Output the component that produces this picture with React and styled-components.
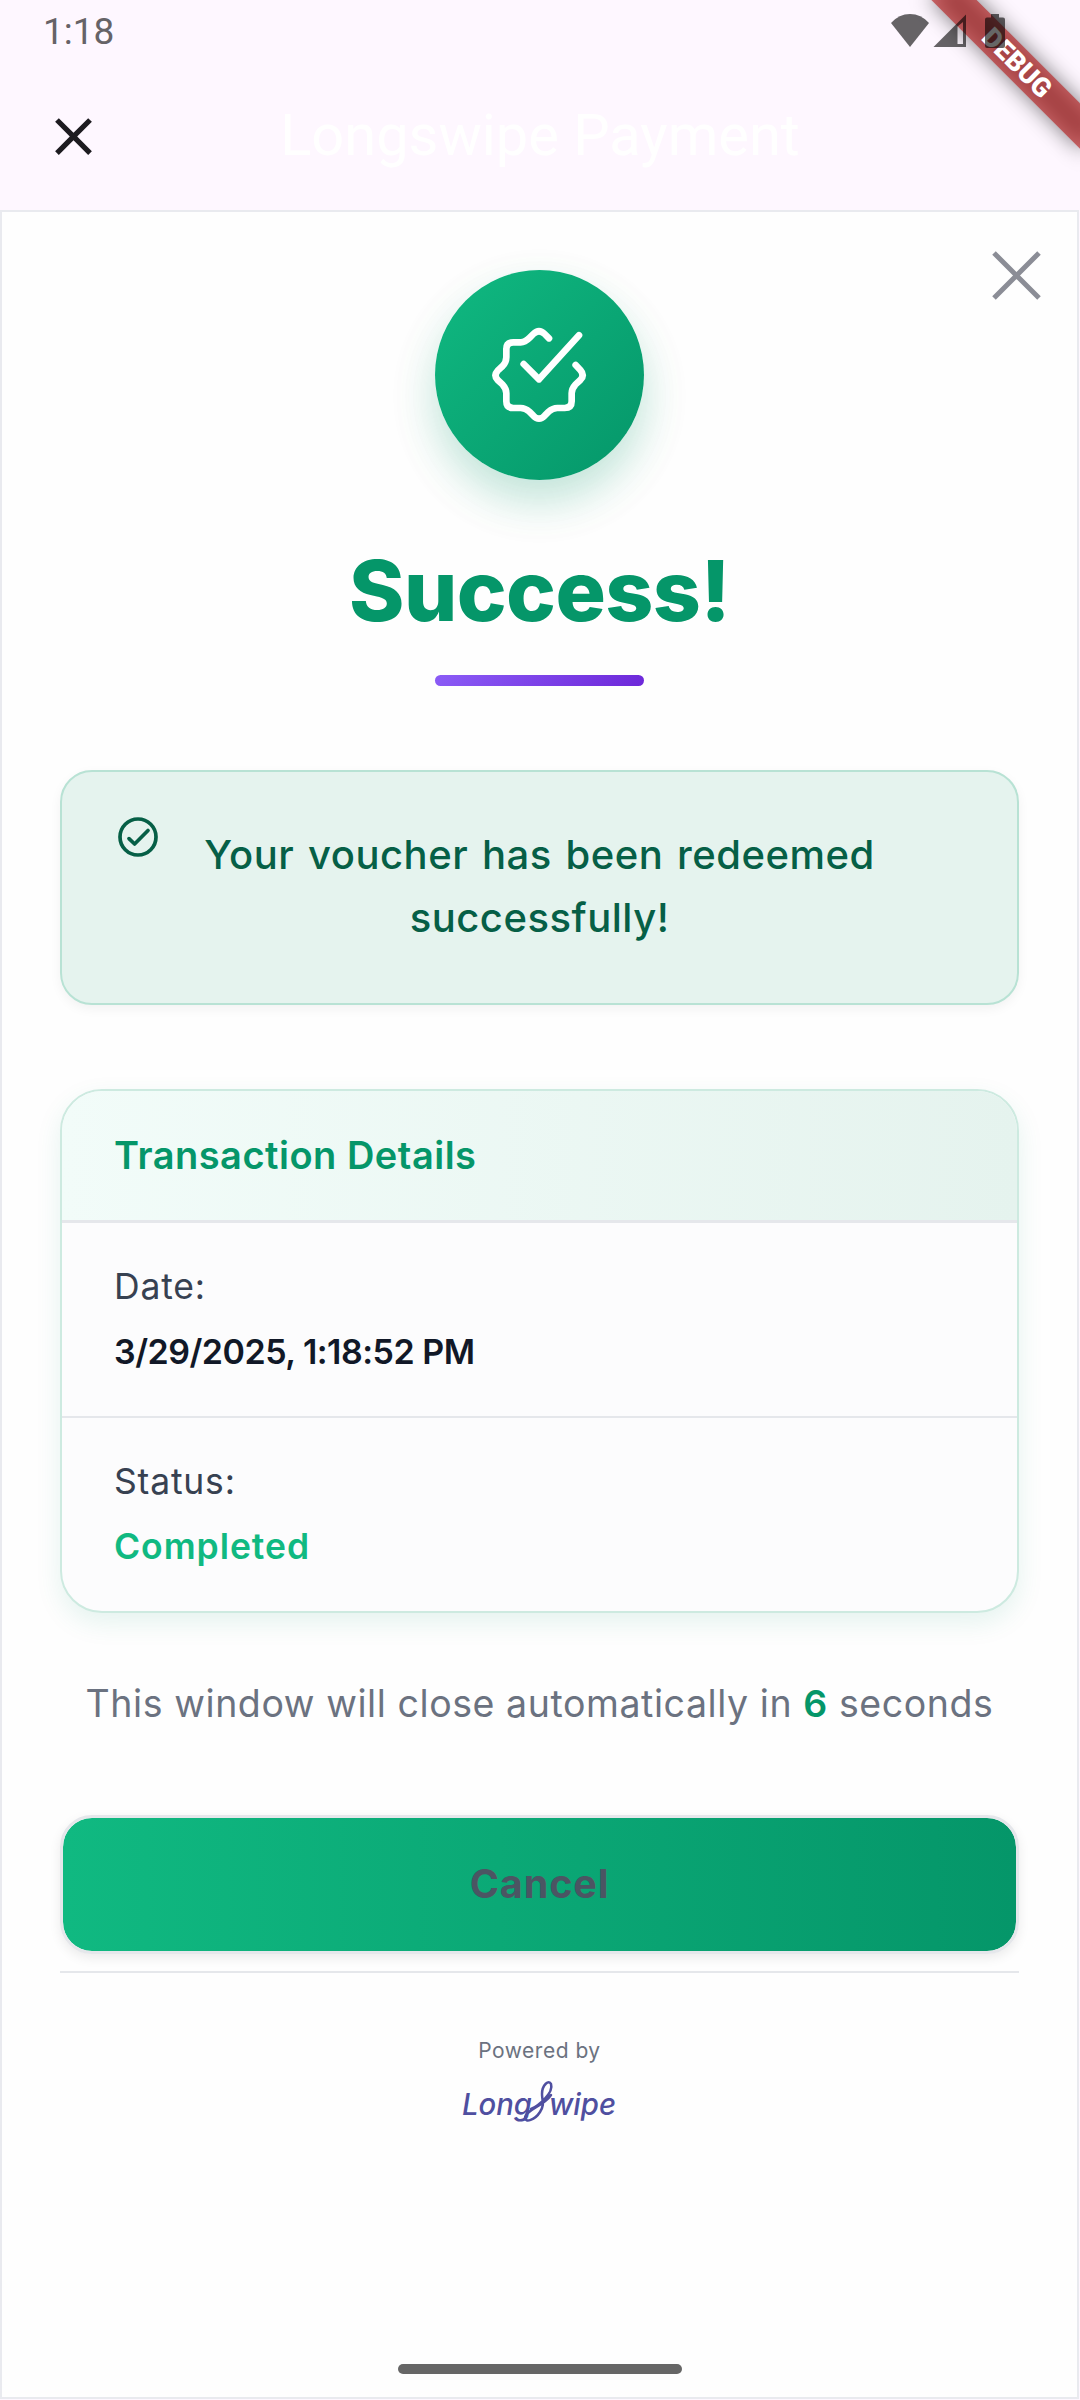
import styled, { createGlobalStyle } from "styled-components";

const GlobalStyle = createGlobalStyle`
    * {
        box-sizing: border-box;
    }

    body {
        margin: 0;
        background-color: #fef7ff;
        font-family: Inter, "Open Sans", sans-serif;
    }

    p, h1, h2 {
        margin: 0;
    }
`

const Screen = styled.div`
    position: relative;
    width: 1080px;
    height: 2400px;
    display: flex;
    flex-direction: column;
    overflow: hidden;
`

/* status bar */
const StatusBar = styled.div`
    position: relative;
    z-index: 2;
    height: 63px;
    padding: 0 74px 0 43px;
    display: flex;
    justify-content: space-between;
    color: #666367;
`

const Clock = styled.p`
    font-family: Roboto, sans-serif;
    font-size: 37px;
    line-height: 63px;
`

const StatusIcons = styled.svg`
    width: 116px;
    height: 36px;
    margin-top: 13px;
`

/* debug banner */
const BannerClip = styled.div`
    position: absolute;
    top: 0;
    right: 0;
    width: 260px;
    height: 260px;
    overflow: hidden;
`

const BannerStrip = styled.div`
    position: absolute;
    left: 91px;
    top: 47px;
    width: 212px;
    height: 32px;
    transform: rotate(45deg);
`

const BannerShadow = styled(BannerStrip)`
    background-color: rgba(0, 0, 0, 0.5);
    filter: blur(10.4px);
`

const BannerLabel = styled(BannerStrip)`
    background-color: rgba(183, 28, 28, 0.63);
    color: white;
    font-family: Roboto, sans-serif;
    font-size: 26.8px;
    font-weight: 900;
    line-height: 32px;
    text-align: center;
`

/* app bar */
const AppBar = styled.header`
    height: 147px;
    padding-left: 42px;
    display: grid;
    grid-template-columns: 63px 1fr 105px;
    align-items: center;
`

const AppTitle = styled.h1`
    padding-bottom: 4px;
    font-family: Roboto, sans-serif;
    font-size: 57.75px;
    font-weight: 400;
    line-height: 74px;
    color: white;
    text-align: center;
`

/* checkout window */
const Window = styled.main`
    position: relative;
    width: 1079px;
    height: 2189px;
    padding: 58px 58px 0;
    border: 2px solid #e9eaef;
    background-color: #fefefe;
    display: flex;
    flex-direction: column;
    align-items: center;
`

const CloseIcon = styled.svg`
    position: absolute;
    top: 39px;
    right: 36px;
    width: 49px;
    height: 49px;
`

const Badge = styled.div`
    width: 209px;
    height: 210px;
    border-radius: 50%;
    display: flex;
    justify-content: center;
    align-items: center;
    background: linear-gradient(135deg, #10b981, #059669);
    box-shadow: 0 21px 63px rgba(5, 150, 105, 0.06), 0 21px 42px rgba(5, 150, 105, 0.2);
`

const Title = styled.h2`
    margin-top: 61px;
    font-size: 84px;
    font-weight: 800;
    line-height: 100px;
    letter-spacing: -0.6px;
    color: #059669;
`

const Underline = styled.div`
    width: 209px;
    height: 11px;
    margin-top: 34px;
    border-radius: 6px;
    background: linear-gradient(135deg, #8b5cf6, #6d28d9);
`

const Notice = styled.section`
    width: 959px;
    height: 235px;
    margin-top: 84px;
    padding: 44px 55px;
    display: grid;
    grid-template-columns: 42px 1fr 42px;
    border: 2px solid #b8e2d4;
    border-radius: 32px;
    background-color: #e5f3ee;
    box-shadow: 0 4px 12px rgba(0, 0, 0, 0.05);
`

const NoticeText = styled.p`
    margin-top: 7px;
    font-size: 40px;
    font-weight: 500;
    line-height: 63px;
    letter-spacing: 0.5px;
    word-spacing: 2.6px;
    text-align: center;
    white-space: nowrap;
    color: #065f46;
`

const Details = styled.section`
    width: 959px;
    margin-top: 84px;
    border: 2px solid #cdeae0;
    border-radius: 42px;
    background-color: #fcfcfd;
    box-shadow: 0 10px 26px rgba(5, 150, 105, 0.1);
    overflow: hidden;
`

const DetailsHeader = styled.div`
    height: 132px;
    padding-left: 52px;
    border-bottom: 3px solid #e5e7eb;
    background: linear-gradient(90deg, #f2fcf9, #e5f3ee);
    color: #059669;
    font-size: 38px;
    font-weight: 600;
    line-height: 128px;
    letter-spacing: 0.5px;
`

const DetailsRow = styled.div`
    height: ${({ $last }) => ($last ? 193 : 195)}px;
    padding: 31px 52px 0;
    border-bottom: ${({ $last }) => ($last ? "none" : "2px solid #e5e7eb")};
`

const RowLabel = styled.p`
    font-size: 35.5px;
    font-weight: 400;
    line-height: 65px;
    letter-spacing: 0.8px;
    color: #374151;
`

const RowValue = styled.p`
    font-size: ${({ $size }) => $size}px;
    font-weight: 600;
    line-height: 65px;
    letter-spacing: ${({ $spacing }) => $spacing}px;
    color: ${({ $color }) => $color};
`

const Countdown = styled.p`
    margin-top: 59px;
    font-size: 37.5px;
    line-height: 63px;
    letter-spacing: 0.57px;
    color: #6b7280;
    white-space: nowrap;

    b {
        font-weight: 600;
        color: #059669;
    }
`

const CancelButton = styled.button`
    width: 959px;
    height: 139px;
    margin-top: 80px;
    padding: 0 0 2px;
    border: 3px solid #e5e7eb;
    border-radius: 32px;
    background: linear-gradient(90deg, #10b981, #059669) padding-box;
    box-shadow: 0 4px 12px rgba(0, 0, 0, 0.08);
    color: #4b5563;
    font-family: inherit;
    font-size: 39.5px;
    font-weight: 700;
    letter-spacing: 0.9px;
`

const Footer = styled.footer`
    width: 959px;
    margin-top: 17px;
    padding-top: 62px;
    border-top: 2px solid #e5e7eb;
    display: flex;
    flex-direction: column;
    align-items: center;
`

const PoweredBy = styled.p`
    font-size: 21px;
    line-height: 32px;
    letter-spacing: 0.5px;
    color: #6b7280;
`

const Logo = styled.svg`
    width: 156px;
    height: 44px;
    margin-top: 12px;
    font-family: Inter, sans-serif;
    font-size: 30px;
    font-weight: 500;
    font-style: italic;
`

const HomeBar = styled.div`
    position: absolute;
    left: 398px;
    bottom: 26px;
    width: 284px;
    height: 10px;
    border-radius: 5px;
    background-color: #666;
`

const DebugBanner = () => (
    <BannerClip>
        <BannerShadow />
        <BannerLabel>DEBUG</BannerLabel>
    </BannerClip>
)

const BackIcon = () => (
    <svg width="63" height="63" viewBox="0 0 24 24" fill="#1d1b20">
        <path d="M19 6.41L17.59 5 12 10.59 6.41 5 5 6.41 10.59 12 5 17.59 6.41 19 12 13.41 17.59 19 19 17.59 13.41 12z" />
    </svg>
)

const BadgeIcon = () => (
    <svg width="105" height="105" viewBox="261 247 315 315" fill="none" stroke="white" strokeWidth="20" strokeLinecap="round" strokeLinejoin="round">
        <path d="M447 293L434 280Q417 263 400 280L390 290Q375 305 362 305H340Q319 305 319 325V350Q319 365 308 376L293 390Q280 404 293 418L308 432Q319 444 319 458V482Q319 502 340 502H362Q376 502 388 513L400 525Q417 543 434 525L446 513Q458 502 472 502H494Q515 502 515 482V458Q515 444 526 432L541 418Q555 404 541 388L527 373" />
        <path d="M371 370L417 416L537 284" />
    </svg>
)

const NoticeIcon = () => (
    <svg width="42" height="42" viewBox="0 0 42 42" fill="none" stroke="#065f46" strokeWidth="3.7" strokeLinecap="round" strokeLinejoin="round">
        <circle cx="21" cy="21" r="18" />
        <path d="M12 22.6L17.6 28L31 14.5" />
    </svg>
)

const rows = [
    { label: "Date:", value: "3/29/2025, 1:18:52 PM", color: "#111827", size: 34, spacing: -0.5 },
    { label: "Status:", value: "Completed", color: "#10b981", size: 35.5, spacing: 0.95 },
]

const App = () => {
    return (<>
        <GlobalStyle />
        <Screen>
            <DebugBanner />
            <StatusBar>
                <Clock>1:18</Clock>
                <StatusIcons viewBox="0 0 116 36" fill="rgba(0, 0, 0, 0.6)">
                    <path d="M20 34L1 10Q9 1 20 1T39 10Z" />
                    <path fillRule="evenodd" d="M43.500 34L76 1.500V34ZM67.500 13.500V31H73V9Z" />
                    <path d="M101 1H109V4.500H113Q115 4.500 115 6.500V33Q115 35 113 35H97Q95 35 95 33V6.500Q95 4.500 97 4.500H101Z" />
                </StatusIcons>
            </StatusBar>
            <AppBar>
                <BackIcon />
                <AppTitle>Longswipe Payment</AppTitle>
            </AppBar>
            <Window>
                <CloseIcon viewBox="0 0 49 49" stroke="#8b8d96" strokeWidth="5">
                    <path d="M2 2L47 47M47 2L2 47" />
                </CloseIcon>
                <Badge>
                    <BadgeIcon />
                </Badge>
                <Title>Success!</Title>
                <Underline />
                <Notice>
                    <NoticeIcon />
                    <NoticeText>Your voucher has been redeemed<br />successfully!</NoticeText>
                </Notice>
                <Details>
                    <DetailsHeader>Transaction Details</DetailsHeader>
                    {
                        rows.map((row, i) =>
                            <DetailsRow key={row.label} $last={i === rows.length - 1}>
                                <RowLabel>{row.label}</RowLabel>
                                <RowValue $color={row.color} $size={row.size} $spacing={row.spacing}>{row.value}</RowValue>
                            </DetailsRow>
                        )
                    }
                </Details>
                <Countdown>This window will close automatically in <b>6</b> seconds</Countdown>
                <CancelButton>Cancel</CancelButton>
                <Footer>
                    <PoweredBy>Powered by</PoweredBy>
                    <Logo viewBox="0 0 156 44" fill="#4f4fa0">
                        <text x="0" y="36" textLength="70" lengthAdjust="spacingAndGlyphs">Long</text>
                        <text x="87" y="36" textLength="67" lengthAdjust="spacingAndGlyphs">wipe</text>
                        <path d="M69 30C76 27 92 14 89 5C87 0 80 6 80 15C80 22 83 25 78 33C73 41 63 44 63 39C63 31 82 27 89 16" fill="none" stroke="#4f4fa0" strokeWidth="2.500" strokeLinecap="round" />
                    </Logo>
                </Footer>
            </Window>
            <HomeBar />
        </Screen>
    </>
    )
}

export default App;
